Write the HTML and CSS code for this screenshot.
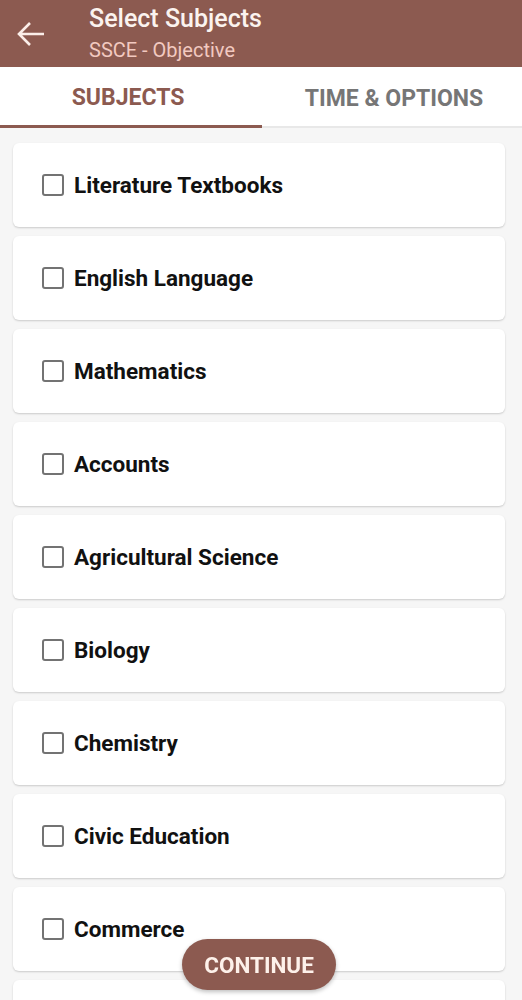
FILE: index.html
```html
<!DOCTYPE html>
<html lang="en">
<head>
  <meta charset="UTF-8" />
  <meta name="viewport" content="width=device-width, initial-scale=1.0" />
  <title>Select Subjects</title>
  <link rel="stylesheet" href="styles.css">
</head>
<body>
  <header class="appbar">
    <a href="#" class="back-button">
      <svg width="32" height="32" viewBox="0 0 32 32"><path d="M29 16H4M15 5L4 16l11 11" fill="none" stroke="#fbeee9" stroke-width="2.6"/></svg>
    </a>
    <div class="titles">
      <div class="title">Select Subjects</div>
      <div class="subtitle">SSCE - Objective</div>
    </div>
  </header>

  <nav class="tabs">
    <div class="tab active">SUBJECTS</div>
    <div class="tab">TIME &amp; OPTIONS</div>
  </nav>

  <div class="subject-list">
    <label class="subject"><span class="box"></span>Literature Textbooks</label>
    <label class="subject"><span class="box"></span>English Language</label>
    <label class="subject"><span class="box"></span>Mathematics</label>
    <label class="subject"><span class="box"></span>Accounts</label>
    <label class="subject"><span class="box"></span>Agricultural Science</label>
    <label class="subject"><span class="box"></span>Biology</label>
    <label class="subject"><span class="box"></span>Chemistry</label>
    <label class="subject"><span class="box"></span>Civic Education</label>
    <label class="subject"><span class="box"></span>Commerce</label>
    <div class="subject"></div>
  </div>

  <button class="continue-button">CONTINUE</button>
</body>
</html>
```

FILE: styles.css
```css
body {
  margin: 0;
  font-family: Roboto, "Noto Sans", sans-serif;
  background-color: #f6f6f6;
  height: 1000px;
  overflow: hidden;
}
.appbar {
  display: flex;
  align-items: center;
  height: 67px;
  background: #8c5a50;
  color: #fbf3ef;
}
.back-button {
  display: flex;
  width: 32px;
  margin-left: 15px;
  margin-right: 42px;
}
.title {
  font-size: 25px;
  font-weight: 500;
  line-height: 28px;
}
.subtitle {
  font-size: 20px;
  color: #f2c9c0;
  line-height: 25px;
  margin-top: 5px;
}
.tabs {
  display: flex;
  height: 61px;
  background: white;
  border-bottom: 2px solid #e8e8e8;
  box-sizing: border-box;
}
.tab {
  flex: 1;
  display: flex;
  align-items: center;
  justify-content: center;
  font-size: 23px;
  font-weight: bold;
  color: #767676;
  padding-top: 3px;
}
.tab.active {
  color: #8c5a50;
  border-bottom: 3px solid #8c5a50;
  margin-bottom: -2px;
  padding-right: 6px;
}
.tab:last-child {
  padding-left: 4px;
}
.subject-list {
  display: flex;
  flex-direction: column;
  gap: 9px;
  padding: 15px 17px 0 13px;
}
.subject {
  display: flex;
  align-items: center;
  height: 84px;
  flex-shrink: 0;
  background: white;
  border-radius: 6px;
  box-shadow: 0 1px 2px rgba(0, 0, 0, 0.18);
  padding-left: 29px;
  font-size: 22.5px;
  font-weight: bold;
  color: #111;
}
.box {
  width: 18px;
  height: 18px;
  border: 2px solid #737373;
  border-radius: 3px;
  margin-right: 10px;
}
.continue-button {
  position: fixed;
  left: 182px;
  top: 939px;
  width: 154px;
  height: 51px;
  border: none;
  border-radius: 26px;
  background: #8c5a50;
  color: #fdf1ea;
  font-family: Roboto, sans-serif;
  font-size: 22.5px;
  font-weight: bold;
  box-shadow: 0 2px 4px rgba(0, 0, 0, 0.25);
}
```
